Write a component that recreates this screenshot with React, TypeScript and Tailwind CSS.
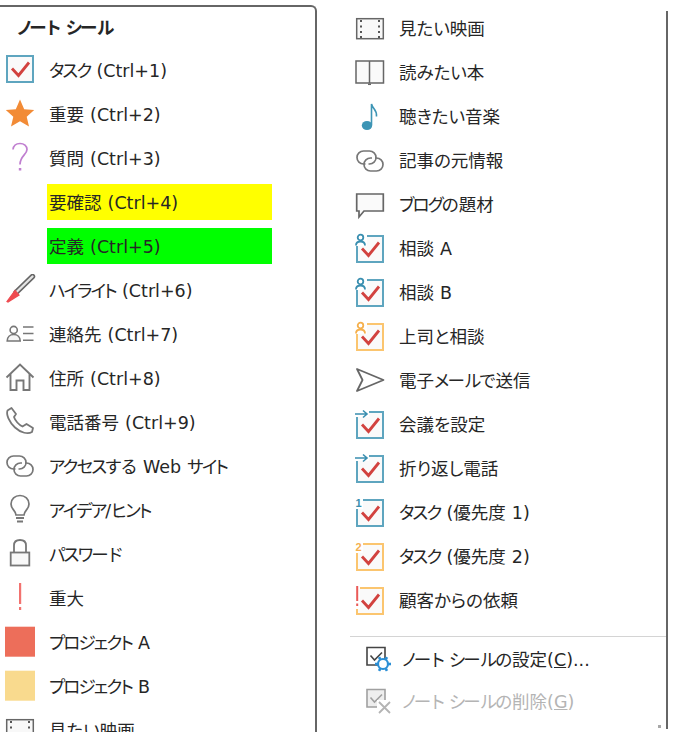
import type { ReactNode } from 'react'

const BLUE = '#5ea5bf'
const ORANGE = '#fbc56f'
const GRAY = '#777777'

// katakana sits tighter than the kanji in the original UI font
function Label({ text }: { text: string }) {
  return (
    <>
      {text.split(/([ァ-ヶ]+)/).map((part, i) =>
        i % 2 === 1 ? (
          <span key={i} className="tracking-[-1.8px]">
            {part}
          </span>
        ) : (
          part
        ),
      )}
    </>
  )
}

function Frame({ children }: { children: ReactNode }) {
  return (
    <svg width="32" height="32" viewBox="0 0 32 32" fill="none" className="shrink-0">
      {children}
    </svg>
  )
}

function CheckBox({ color = BLUE, y = 3 }: { color?: string; y?: number }) {
  return (
    <>
      <rect x="3" y={y} width="26" height="26" fill="#fafafa" stroke={color} strokeWidth="2" />
      <path d={`M8 ${y + 12.5}L14.5 ${y + 19.5}L25 ${y + 6.5}`} stroke="#d2423f" strokeWidth="2.8" />
    </>
  )
}

function PersonCheck({ color = BLUE, person = '#3a8fb0' }: { color?: string; person?: string }) {
  return (
    <Frame>
      <CheckBox color={color} />
      <rect x="0" y="0" width="13" height="13" fill="#fff" />
      <circle cx="6.5" cy="4.5" r="2.8" stroke={person} strokeWidth="1.8" />
      <path d="M2 12.5C2 9.5 4 8.5 6.5 8.5C9 8.5 11 9.5 11 12.5" stroke={person} strokeWidth="1.8" />
    </Frame>
  )
}

function ArrowCheck() {
  return (
    <Frame>
      <CheckBox />
      <rect x="0" y="0" width="15" height="8" fill="#fff" />
      <path d="M1 5H13M9 1.5L13 5L9 8.5" stroke="#3a8fb0" strokeWidth="1.6" />
    </Frame>
  )
}

function NumberCheck({ n, color, digit }: { n: string; color: string; digit: string }) {
  return (
    <Frame>
      <CheckBox color={color} />
      <rect x="0" y="0" width="9" height="12" fill="#fff" />
      <text x="1.5" y="10" fontSize="11" fontWeight="700" fill={digit} fontFamily="'Liberation Sans', sans-serif">
        {n}
      </text>
    </Frame>
  )
}

function LinkIcon() {
  return (
    <Frame>
      <rect x="3" y="6" width="19" height="13" rx="6.5" stroke={GRAY} strokeWidth="1.7" />
      <rect x="10" y="13" width="19" height="13" rx="6.5" stroke={GRAY} strokeWidth="1.7" />
      <rect x="11.5" y="17.5" width="3" height="3" fill="#fff" />
      <rect x="18" y="11.5" width="3" height="3" fill="#fff" />
    </Frame>
  )
}

function Film() {
  const ys = [7, 12.5, 18, 23]
  return (
    <Frame>
      <rect x="2.7" y="5.7" width="26.6" height="20" fill="#f8f8f8" stroke="#666" strokeWidth="1.5" />
      {ys.map(y => (
        <g key={y} fill="#555">
          <rect x="6" y={y} width="2" height="2" />
          <rect x="24" y={y} width="2" height="2" />
        </g>
      ))}
    </Frame>
  )
}

function Gear({ cx, cy }: { cx: number; cy: number }) {
  const angles = [0, 60, 120, 180, 240, 300]
  return (
    <g stroke="#2b8fd6">
      <circle cx={cx} cy={cy} r="5" fill="#fff" strokeWidth="2.2" />
      {angles.map(a => (
        <line
          key={a}
          x1={cx + 5.5 * Math.cos((a * Math.PI) / 180)}
          y1={cy + 5.5 * Math.sin((a * Math.PI) / 180)}
          x2={cx + 8 * Math.cos((a * Math.PI) / 180)}
          y2={cy + 8 * Math.sin((a * Math.PI) / 180)}
          strokeWidth="2.6"
        />
      ))}
    </g>
  )
}

const leftItems: { label: string; icon?: ReactNode; bg?: string }[] = [
  { label: 'タスク (Ctrl+1)', icon: <Frame><CheckBox y={2} /></Frame> },
  {
    label: '重要 (Ctrl+2)',
    icon: <Frame><path d="M16 1.5L20.2 11.2L30.2 12L22.7 18.7L25 28.5L16 23.3L7 28.5L9.3 18.7L1.8 12L11.8 11.2Z" fill="#f28b36" /></Frame>,
  },
  {
    label: '質問 (Ctrl+3)',
    icon: (
      <Frame>
        <path d="M9 7.5C9.5 3.5 12.5 1.5 16 1.5C20 1.5 23 4 23 7.5C23 12.5 16 14 16 22.5" stroke="#c07fd0" strokeWidth="1.7" />
        <rect x="14.8" y="26" width="2.5" height="2.5" fill="#c07fd0" />
      </Frame>
    ),
  },
  { label: '要確認 (Ctrl+4)', bg: 'bg-[#ffff00]' },
  { label: '定義 (Ctrl+5)', bg: 'bg-[#00ff00]' },
  {
    label: 'ハイライト (Ctrl+6)',
    icon: (
      <Frame>
        <path d="M28.5 2.5L12 18.5" stroke="#666" strokeWidth="5.4" strokeLinecap="round" />
        <path d="M28.5 2.5L12 18.5" stroke="#e4e4e4" strokeWidth="2.4" strokeLinecap="round" />
        <path d="M11 16.5L3 27.5L4 28L15 21Z" fill="#ee4b50" stroke="#ee4b50" strokeWidth="1.2" />
      </Frame>
    ),
  },
  {
    label: '連絡先 (Ctrl+7)',
    icon: (
      <Frame>
        <circle cx="9.7" cy="12" r="3.6" stroke={GRAY} strokeWidth="1.6" />
        <path d="M3.2 23C3.2 19 6 16.5 9.7 16.5C13.5 16.5 16.2 19 16.2 23Z" fill="#f5f5f5" stroke={GRAY} strokeWidth="1.6" />
        <path d="M19 9H29.5M19 15.5H29.5M19 22.2H29.5" stroke={GRAY} strokeWidth="1.5" />
      </Frame>
    ),
  },
  {
    label: '住所 (Ctrl+8)',
    icon: (
      <Frame>
        <path d="M2.5 15.5L16 2.5L29.5 15.5M6.5 12V28H12.5V18.5H19.5V28H25.5V12" stroke={GRAY} strokeWidth="1.9" />
      </Frame>
    ),
  },
  {
    label: '電話番号 (Ctrl+9)',
    icon: (
      <Frame>
        <path
          d="M7.5 2L3.5 4.5C2 8.5 5 16 11 21.5C17 27 24 28.5 28 26L29 22L22.5 18L18.5 20.5C15 19 11 14.5 10 11L12 8Z"
          stroke={GRAY}
          strokeWidth="1.8"
          strokeLinejoin="round"
        />
      </Frame>
    ),
  },
  { label: 'アクセスする Web サイト', icon: <LinkIcon /> },
  {
    label: 'アイデア/ヒント',
    icon: (
      <Frame>
        <path
          d="M12 21C12 16.5 7 15.5 7 10C7 5 11 1.5 16 1.5C21 1.5 25 5 25 10C25 15.5 20 16.5 20 21Z"
          stroke={GRAY}
          strokeWidth="1.7"
        />
        <path d="M12 24H20M13 27.5H19" stroke={GRAY} strokeWidth="2" />
      </Frame>
    ),
  },
  {
    label: 'パスワード',
    icon: (
      <Frame>
        <path d="M10 14.5V7.5C10 3.8 12.5 2 16 2C19.5 2 22 3.8 22 7.5V14.5" stroke={GRAY} strokeWidth="1.8" />
        <rect x="6.7" y="14.5" width="18.6" height="13" fill="#f8f8f8" stroke={GRAY} strokeWidth="1.8" />
      </Frame>
    ),
  },
  {
    label: '重大',
    icon: (
      <Frame>
        <rect x="15" y="1" width="2.2" height="21" fill="#f2726f" />
        <rect x="15" y="25" width="2.2" height="3" fill="#f2726f" />
      </Frame>
    ),
  },
  { label: 'プロジェクト A', icon: <Frame><rect x="1" y="0.7" width="30" height="30" fill="#ed6e5a" /></Frame> },
  { label: 'プロジェクト B', icon: <Frame><rect x="1" y="0.7" width="30" height="30" fill="#f9da8e" /></Frame> },
  { label: '見たい映画', icon: <Film /> },
]

const rightItems: { label: string; icon: ReactNode }[] = [
  { label: '見たい映画', icon: <Film /> },
  {
    label: '読みたい本',
    icon: (
      <Frame>
        <path d="M2 4H15.5V26H2ZM15.5 4H29.5V26H15.5Z" fill="#fafafa" stroke="#666" strokeWidth="1.5" />
        <path d="M14 27.3H17" stroke="#666" strokeWidth="1.5" />
      </Frame>
    ),
  },
  {
    label: '聴きたい音楽',
    icon: (
      <Frame>
        <ellipse cx="13" cy="24.5" rx="5.2" ry="4.6" fill="#3d95b5" />
        <path d="M17.5 24V3C18.5 8 23.5 9 22.5 15.5" stroke="#3d95b5" strokeWidth="1.6" />
      </Frame>
    ),
  },
  { label: '記事の元情報', icon: <LinkIcon /> },
  {
    label: 'ブログの題材',
    icon: (
      <Frame>
        <path d="M2.7 5H29.3V22H10L5 28V22H2.7Z" fill="#fafafa" stroke="#666" strokeWidth="1.7" />
      </Frame>
    ),
  },
  { label: '相談 A', icon: <PersonCheck /> },
  { label: '相談 B', icon: <PersonCheck /> },
  { label: '上司と相談', icon: <PersonCheck color={ORANGE} person="#f5b04d" /> },
  {
    label: '電子メールで送信',
    icon: (
      <Frame>
        <path d="M3 4L29.5 15L3 26L8.5 15Z" stroke="#666" strokeWidth="1.8" strokeLinejoin="round" />
      </Frame>
    ),
  },
  { label: '会議を設定', icon: <ArrowCheck /> },
  { label: '折り返し電話', icon: <ArrowCheck /> },
  { label: 'タスク (優先度 1)', icon: <NumberCheck n="1" color={BLUE} digit="#3a8fb0" /> },
  { label: 'タスク (優先度 2)', icon: <NumberCheck n="2" color={ORANGE} digit="#f5b04d" /> },
  {
    label: '顧客からの依頼',
    icon: (
      <Frame>
        <CheckBox color={ORANGE} />
        <rect x="0" y="0" width="6" height="24" fill="#fff" />
        <rect x="2.2" y="1" width="2" height="15" fill="#ea5a58" />
        <rect x="2.2" y="18.5" width="2" height="2.5" fill="#ea5a58" />
      </Frame>
    ),
  },
]

export default function App() {
  return (
    <div className="flex h-[732px] w-[693px] overflow-hidden bg-white font-['DejaVu_Sans','Noto_Sans_CJK_JP',sans-serif] text-[17.5px] text-[#262626] [font-feature-settings:'palt'] [word-spacing:0.5px]">
      <div className="mt-[5px] flex w-[317px] shrink-0 flex-col gap-2 rounded-tr-md border-t-2 border-r-2 border-[#666666]">
        <div className="h-[37px] shrink-0 pl-[17px] leading-[42px] font-bold">
          <Label text="ノート シール" />
        </div>
        {leftItems.map(item => (
          <div key={item.label} className="flex h-9 shrink-0 items-center pl-1">
            <div className="w-[43px] shrink-0">{item.icon}</div>
            <div className={`flex h-9 w-[225px] items-center pt-0.5 pl-0.5 whitespace-pre ${item.bg ?? ''}`}>
              <span>
                <Label text={item.label} />
              </span>
            </div>
          </div>
        ))}
      </div>

      <div className="relative mt-[11px] mb-[3px] flex w-[351px] flex-col border-r-2 border-[#666666]">
        <div className="flex flex-col gap-2 pl-[37px]">
          {rightItems.map(item => (
            <div key={item.label} className="flex h-9 items-center gap-[13px]">
              {item.icon}
              <span>
                <Label text={item.label} />
              </span>
            </div>
          ))}
        </div>
        <div className="mt-[17px] ml-[33px] border-t border-[#d4d4d4]" />
        <div className="mt-[5px] flex h-9 items-center pl-[47px]">
          <svg width="28" height="28" viewBox="0 0 28 28" fill="none" className="shrink-0">
            <path d="M3 1.5H21V19H3Z" stroke="#444" strokeWidth="1.6" />
            <path d="M6.5 9.5L10.5 14L18 6.5" stroke="#444" strokeWidth="1.6" />
            <Gear cx={19} cy={18} />
          </svg>
          <span className="ml-[10px]">
            <Label text="ノート シールの設定(" />
            <span className="underline">C</span>)...
          </span>
        </div>
        <div className="mt-[6px] flex h-9 items-center pl-[47px] text-[#b4b4b4]">
          <svg width="28" height="28" viewBox="0 0 28 28" fill="none" className="shrink-0">
            <path d="M3 1.5H21V19H3Z" fill="#eeeeee" stroke="#a0a0a0" strokeWidth="1.6" />
            <path d="M6.5 9.5L10.5 14L18 6.5" stroke="#a0a0a0" strokeWidth="1.6" />
            <rect x="13" y="12" width="15" height="15" fill="#fff" />
            <path d="M15 14L26 25M26 14L15 25" stroke="#b4b4b4" strokeWidth="1.8" />
          </svg>
          <span className="ml-[10px]">
            <Label text="ノート シールの削除(" />
            <span className="underline">G</span>)
          </span>
        </div>
        <div className="absolute right-[5px] bottom-[1px] h-[3px] w-[3px] bg-[#a8a8a8]" />
      </div>
    </div>
  )
}
